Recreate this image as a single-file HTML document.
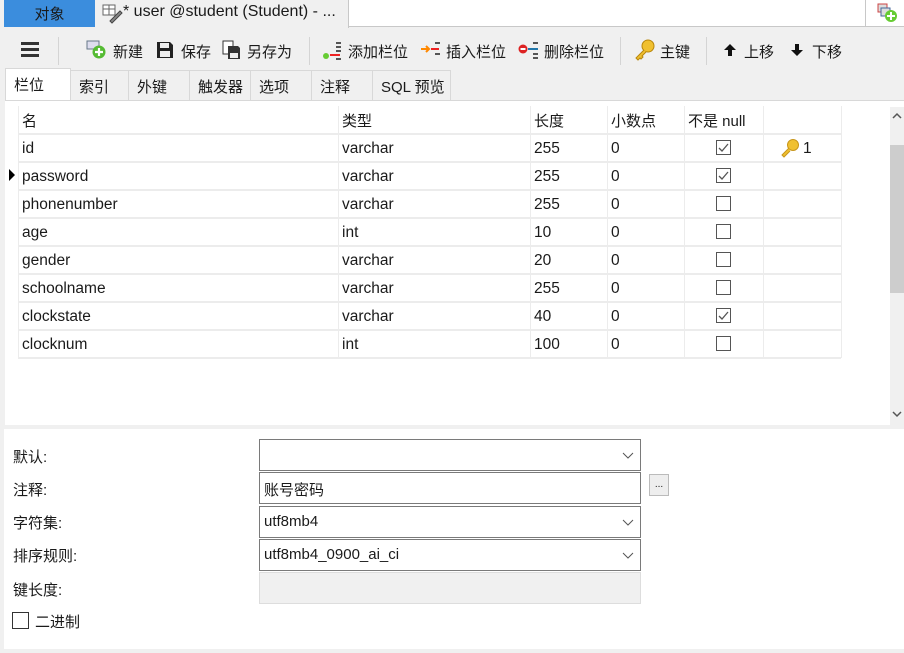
<!DOCTYPE html><html><head><meta charset="utf-8"><style>
*{box-sizing:border-box;margin:0;padding:0}
body{width:904px;height:653px;overflow:hidden;background:#f0f0f0;font-family:"Liberation Sans","Noto Sans CJK SC",sans-serif;font-size:15px;color:#1a1a1a;position:relative}
.a{position:absolute}
.tb span{position:absolute;top:41px;font-size:15px;white-space:nowrap}
.st{position:absolute;top:70px;height:30px;border-right:1px solid #d8d8d8;border-top:1px solid #d8d8d8;padding:5px 0 0 8px;font-size:15px;background:#f0f0f0}
.cell{position:absolute;font-size:15.5px;white-space:nowrap}
.chk{position:absolute;width:15px;height:15px;border:1px solid #333;background:#fff}
.inp{position:absolute;left:259px;width:382px;height:32px;border:1px solid #7a7a7a;background:#fff;padding:6px 4px;font-size:15px}
.lbl{position:absolute;left:13px;font-size:15px}
</style></head><body>
<div class="a" style="left:0;top:0;width:904px;height:27px;background:#fff;border-bottom:1px solid #c8c8c8"></div>
<div class="a" style="left:0;top:0;width:4px;height:27px;background:#f0f0f0"></div>
<div class="a" style="left:4px;top:0;width:91px;height:27px;background:#3b8ddd;text-align:center;padding-top:3px;font-size:15px">对象</div>
<div class="a" style="left:95px;top:0;width:254px;height:28px;background:#f0f0f0;border-right:1px solid #c8c8c8;font-size:16px;padding:3px 0 0 28px;white-space:nowrap">* user @student (Student) - ...</div>
<svg class="a" style="left:102px;top:4px" width="22" height="20"><rect x="1" y="1" width="12" height="10" fill="#fff" stroke="#666"/><line x1="1" y1="5" x2="13" y2="5" stroke="#666"/><line x1="7" y1="1" x2="7" y2="11" stroke="#666"/><path d="M8 17 L18 7 L20 9 L10 19 Z" fill="#888" stroke="#444"/></svg>
<div class="a" style="left:865px;top:0;width:1px;height:27px;background:#c8c8c8"></div>
<svg class="a" style="left:877px;top:3px" width="22" height="20"><rect x="1" y="1" width="9" height="8" fill="#ddd" stroke="#c44"/><rect x="4" y="5" width="9" height="8" fill="#ddd" stroke="#469"/><circle cx="14" cy="13" r="6" fill="#6c3"/><path d="M14 9v8M10 13h8" stroke="#fff" stroke-width="2"/></svg>
<div class="tb">
<div class="a" style="left:21px;top:42px;width:18px;height:3px;background:#333;box-shadow:0 6px 0 #333,0 12px 0 #333"></div>
<div class="a" style="left:58px;top:37px;width:1px;height:28px;background:#d4d4d4"></div>
<svg class="a" style="left:86px;top:39px" width="22" height="22"><rect x="1" y="2" width="12" height="8" fill="#dde" stroke="#678"/><circle cx="13" cy="13" r="6.5" fill="#5b3"/><path d="M13 9v8M9 13h8" stroke="#fff" stroke-width="2.2"/></svg>
<span style="left:113px">新建</span>
<svg class="a" style="left:156px;top:41px" width="18" height="18"><path d="M1 1h13l3 3v13H1z" fill="#222"/><rect x="4" y="2" width="9" height="5" fill="#eee"/><rect x="4" y="10" width="10" height="6" fill="#eee"/></svg>
<span style="left:181px">保存</span>
<svg class="a" style="left:222px;top:40px" width="20" height="20"><rect x="1" y="1" width="10" height="13" fill="#fff" stroke="#333"/><path d="M6 6h10l2 2v11H6z" fill="#333"/><rect x="8" y="13" width="8" height="5" fill="#eee"/></svg>
<span style="left:247px">另存为</span>
<div class="a" style="left:309px;top:37px;width:1px;height:28px;background:#d4d4d4"></div>
<svg class="a" style="left:321px;top:40px" width="24" height="20"><circle cx="5" cy="16" r="3" fill="#6c3"/><rect x="9" y="14" width="10" height="2" fill="#e22"/><rect x="15" y="2" width="5" height="2" fill="#555"/><rect x="15" y="6" width="5" height="2" fill="#555"/><rect x="15" y="10" width="5" height="2" fill="#555"/><rect x="15" y="18" width="5" height="2" fill="#555"/></svg>
<span style="left:348px">添加栏位</span>
<svg class="a" style="left:420px;top:40px" width="24" height="20"><path d="M1 9h8M6 6l3 3-3 3" stroke="#f80" stroke-width="2" fill="none"/><rect x="11" y="8" width="8" height="2" fill="#e22"/><rect x="15" y="2" width="5" height="2" fill="#555"/><rect x="15" y="13" width="5" height="2" fill="#555"/></svg>
<span style="left:446px">插入栏位</span>
<svg class="a" style="left:518px;top:40px" width="24" height="20"><circle cx="5" cy="9" r="4.5" fill="#d22"/><rect x="2.5" y="8" width="5" height="2" fill="#fff"/><rect x="10" y="8" width="10" height="2" fill="#27a"/><rect x="15" y="2" width="5" height="2" fill="#555"/><rect x="15" y="13" width="5" height="2" fill="#555"/><rect x="15" y="17" width="5" height="2" fill="#555"/></svg>
<span style="left:544px">删除栏位</span>
<div class="a" style="left:620px;top:37px;width:1px;height:28px;background:#d4d4d4"></div>
<svg class="a" style="left:634px;top:39px" width="22" height="22"><circle cx="14" cy="7" r="6" fill="#f0c030" stroke="#b8860b"/><path d="M10 11L2 19l2 2 2-2 1 1 2-2-1-1 4-4" fill="#f0c030" stroke="#b8860b"/></svg>
<span style="left:660px">主键</span>
<div class="a" style="left:706px;top:37px;width:1px;height:28px;background:#d4d4d4"></div>
<svg class="a" style="left:723px;top:43px" width="14" height="14"><path d="M7 1L1 7h4v6h4V7h4z" fill="#111"/></svg>
<span style="left:744px">上移</span>
<svg class="a" style="left:790px;top:43px" width="14" height="14"><path d="M7 13L1 7h4V1h4v6h4z" fill="#111"/></svg>
<span style="left:812px">下移</span>
</div>
<div class="st" style="left:5px;width:66px;background:#fff;top:68px;height:33px;border-left:1px solid #d8d8d8">栏位</div>
<div class="st" style="left:71px;width:58px">索引</div>
<div class="st" style="left:129px;width:61px">外键</div>
<div class="st" style="left:190px;width:61px">触发器</div>
<div class="st" style="left:251px;width:61px">选项</div>
<div class="st" style="left:312px;width:61px">注释</div>
<div class="st" style="left:373px;width:78px">SQL 预览</div>
<div class="a" style="left:5px;top:100px;width:899px;height:1px;background:#d8d8d8"></div>
<div class="a" style="left:5px;top:101px;width:899px;height:324px;background:#fff"></div>
<div id="g"></div>
<div class="a" style="left:890px;top:107px;width:14px;height:318px;background:#f0f0f0"></div>
<div class="a" style="left:890px;top:145px;width:14px;height:148px;background:#cdcdcd"></div>
<svg class="a" style="left:892px;top:112px" width="10" height="8"><path d="M1 6l4-4 4 4" stroke="#555" stroke-width="1.5" fill="none"/></svg>
<svg class="a" style="left:892px;top:410px" width="10" height="8"><path d="M1 2l4 4 4-4" stroke="#555" stroke-width="1.5" fill="none"/></svg>
<div class="a" style="left:0;top:425px;width:904px;height:4px;background:#f0f0f0"></div>
<div class="a" style="left:4px;top:429px;width:900px;height:220px;background:#fff"></div>
<div class="lbl" style="top:446px">默认:</div>
<div class="lbl" style="top:479px">注释:</div>
<div class="lbl" style="top:512px">字符集:</div>
<div class="lbl" style="top:545px">排序规则:</div>
<div class="lbl" style="top:579px">键长度:</div>
<div class="chk" style="left:12px;top:612px;width:17px;height:17px"></div>
<div class="lbl" style="left:35px;top:611px">二进制</div>
<div class="inp" style="top:439px"></div>
<div class="inp" style="top:472px">账号密码</div>
<div class="inp" style="top:506px">utf8mb4</div>
<div class="inp" style="top:539px">utf8mb4_0900_ai_ci</div>
<div class="inp" style="top:572px;background:#f0f0f0;border-color:#ddd"></div>
<div class="a" style="left:649px;top:474px;width:20px;height:22px;border:1px solid #bbb;background:#eee;font-size:10px;text-align:center;padding-top:4px">...</div>
<svg class="a" style="left:622px;top:452px" width="12" height="8"><path d="M1 1l5 5 5-5" stroke="#555" fill="none"/></svg>
<svg class="a" style="left:622px;top:519px" width="12" height="8"><path d="M1 1l5 5 5-5" stroke="#555" fill="none"/></svg>
<svg class="a" style="left:622px;top:552px" width="12" height="8"><path d="M1 1l5 5 5-5" stroke="#555" fill="none"/></svg>
<script>
var cols=[18,338,530,607,684,763,841];
var rows=[["id","varchar","255","0",1,1],["password","varchar","255","0",1,0],["phonenumber","varchar","255","0",0,0],["age","int","10","0",0,0],["gender","varchar","20","0",0,0],["schoolname","varchar","255","0",0,0],["clockstate","varchar","40","0",1,0],["clocknum","int","100","0",0,0]];
var h='';
for(var c=0;c<cols.length;c++)h+='<div class="a" style="left:'+cols[c]+'px;top:106px;width:1px;height:252px;background:#ececec"></div>';
for(var r=0;r<=8;r++)h+='<div class="a" style="left:18px;top:'+(133+r*28)+'px;width:823px;height:2px;background:#ececec"></div>';
var hd=["名","类型","长度","小数点","不是 null"];
for(var i=0;i<5;i++)h+='<div class="cell" style="left:'+(cols[i]+4)+'px;top:110px;font-size:15px">'+hd[i]+'</div>';
rows.forEach(function(rw,r){var y=140+r*28;
for(var i=0;i<4;i++)h+='<div class="cell" style="left:'+(cols[i]+4)+'px;top:'+y+'px">'+rw[i]+'</div>';
h+='<div class="chk" style="left:716px;top:'+(y)+'px;border-color:#555">'+(rw[4]?'<svg width="13" height="13" style="position:absolute;left:0;top:0"><path d="M2 7l3 3 6-7" stroke="#555" stroke-width="1.3" fill="none"/></svg>':'')+'</div>';
if(rw[5])h+='<svg class="a" style="left:780px;top:'+(y-2)+'px" width="22" height="20"><circle cx="13" cy="7" r="5.5" fill="#f0c030" stroke="#c8961b"/><path d="M9 10L2 17l2 2 6-6" fill="#f0c030" stroke="#c8961b"/></svg><div class="cell" style="left:803px;top:'+y+'px">1</div>';
});
h+='<svg class="a" style="left:8px;top:168px" width="8" height="14"><path d="M1 1l6 6-6 6z" fill="#000"/></svg>';
document.getElementById('g').innerHTML=h;
</script>
</body></html>
